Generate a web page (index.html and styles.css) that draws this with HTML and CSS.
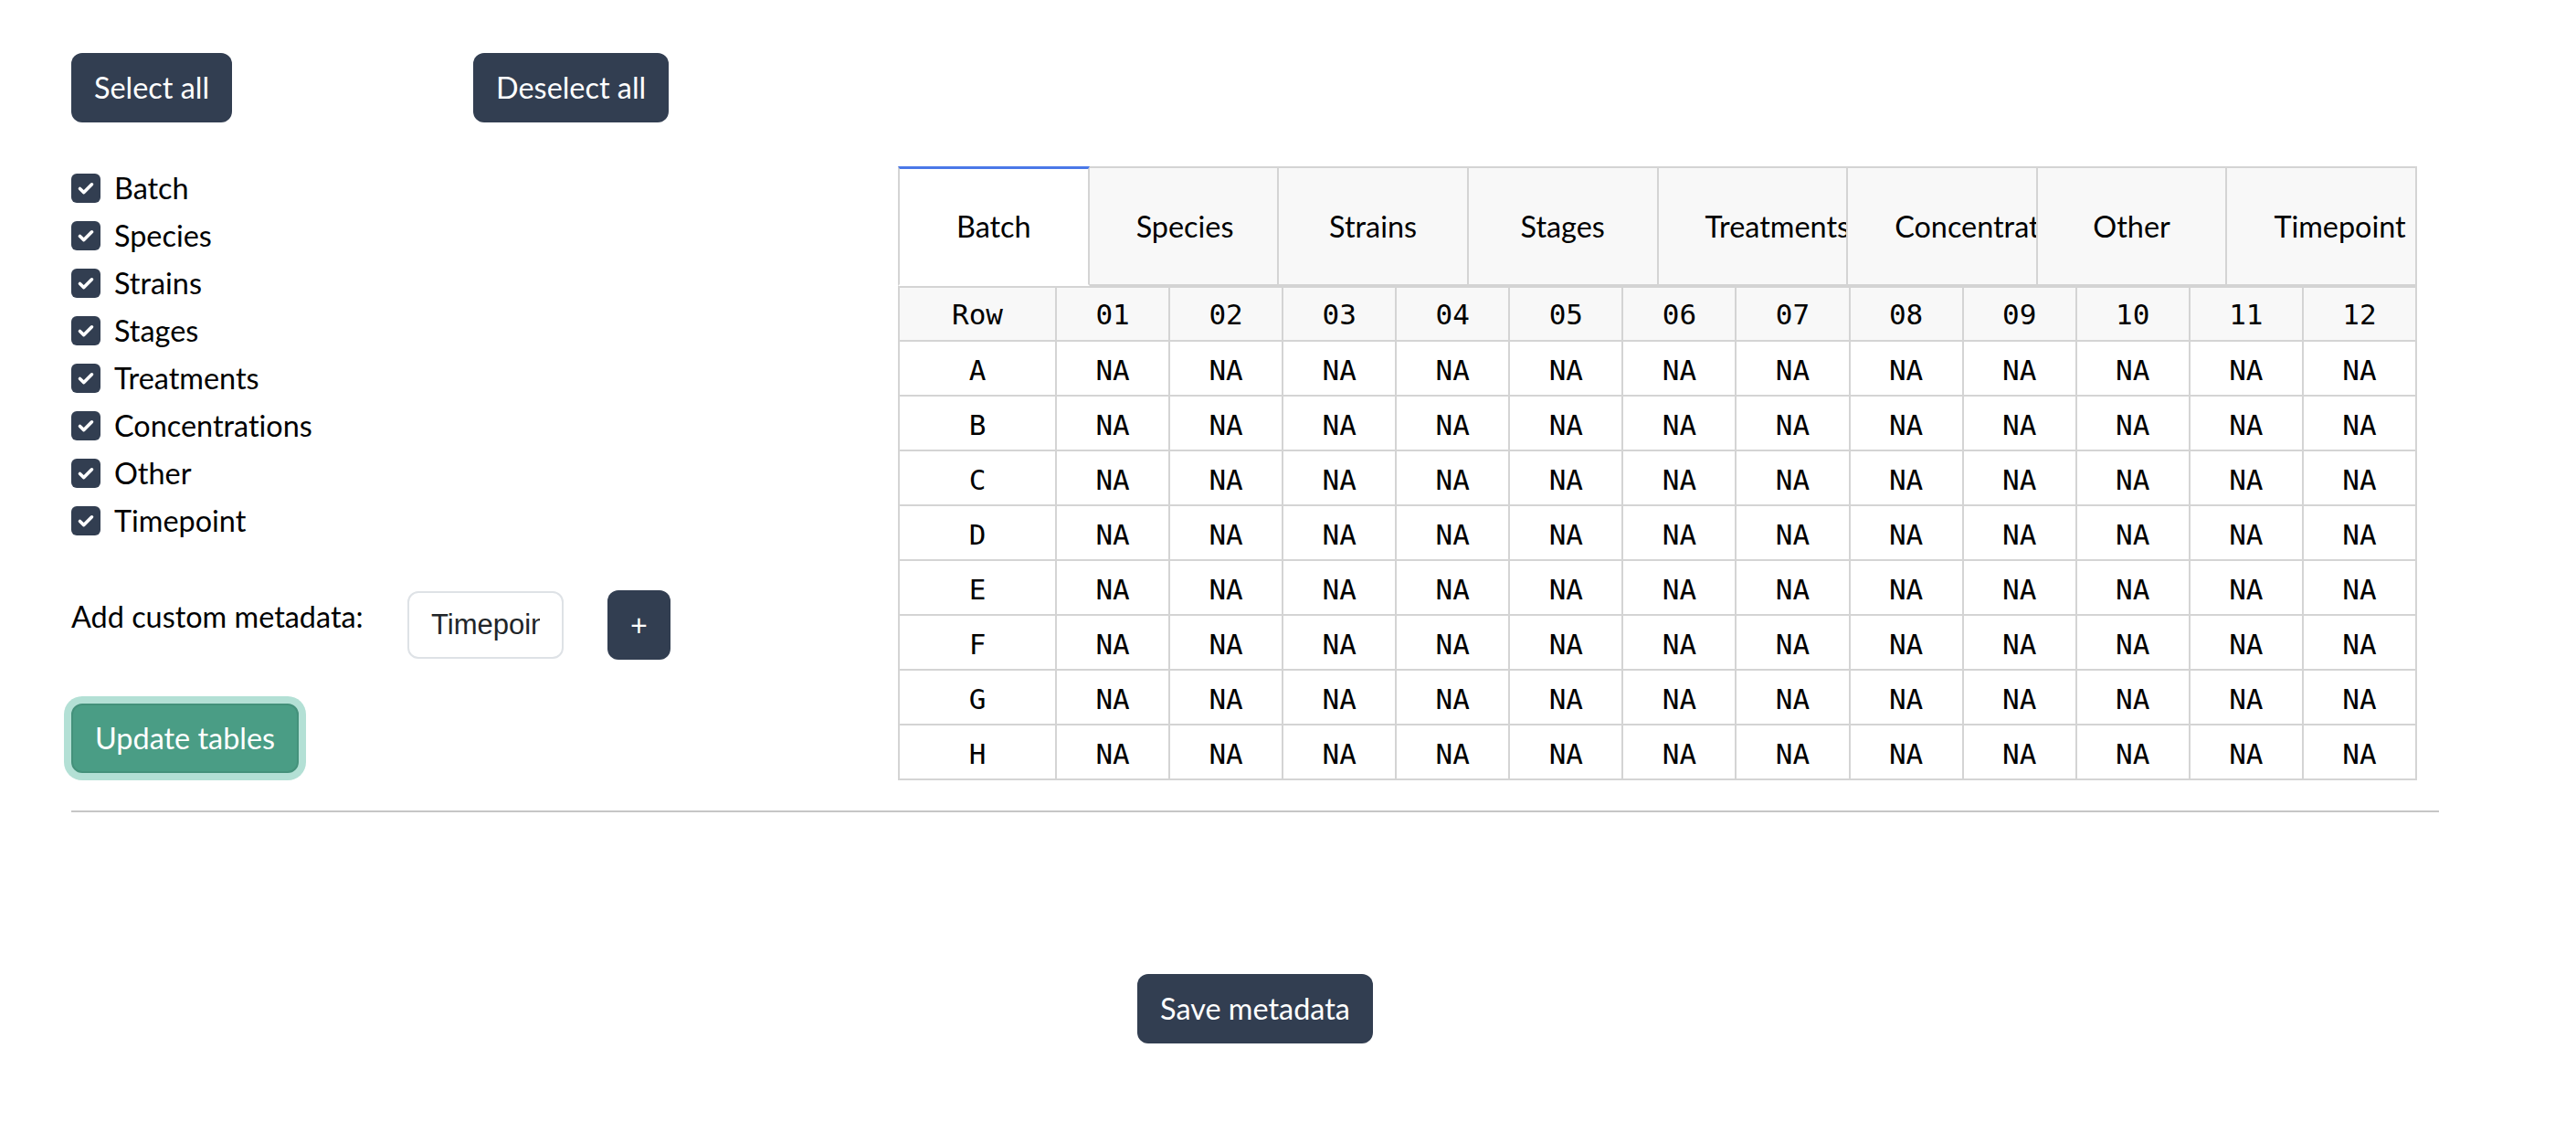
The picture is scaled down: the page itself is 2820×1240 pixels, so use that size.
FILE: index.html
```html
<!DOCTYPE html>
<html lang="en">
<head>
<meta charset="utf-8">
<title>Metadata</title>
<link rel="stylesheet" href="styles.css">
</head>
<body>
<div class="page">
  <div class="top-actions">
    <button class="btn">Select all</button>
    <button class="btn">Deselect all</button>
  </div>

  <div class="main">
    <div class="left">
      <div class="checks">
        <label class="check"><span class="box"><svg viewBox="0 0 32 32"><path d="M9.5 16.5 L13.8 20.6 L22.5 11.8"/></svg></span>Batch</label>
        <label class="check"><span class="box"><svg viewBox="0 0 32 32"><path d="M9.5 16.5 L13.8 20.6 L22.5 11.8"/></svg></span>Species</label>
        <label class="check"><span class="box"><svg viewBox="0 0 32 32"><path d="M9.5 16.5 L13.8 20.6 L22.5 11.8"/></svg></span>Strains</label>
        <label class="check"><span class="box"><svg viewBox="0 0 32 32"><path d="M9.5 16.5 L13.8 20.6 L22.5 11.8"/></svg></span>Stages</label>
        <label class="check"><span class="box"><svg viewBox="0 0 32 32"><path d="M9.5 16.5 L13.8 20.6 L22.5 11.8"/></svg></span>Treatments</label>
        <label class="check"><span class="box"><svg viewBox="0 0 32 32"><path d="M9.5 16.5 L13.8 20.6 L22.5 11.8"/></svg></span>Concentrations</label>
        <label class="check"><span class="box"><svg viewBox="0 0 32 32"><path d="M9.5 16.5 L13.8 20.6 L22.5 11.8"/></svg></span>Other</label>
        <label class="check"><span class="box"><svg viewBox="0 0 32 32"><path d="M9.5 16.5 L13.8 20.6 L22.5 11.8"/></svg></span>Timepoint</label>
      </div>

      <div class="custom-row">
        <span class="custom-label">Add custom metadata:</span>
        <input class="custom-input" type="text" value="Timepoint">
        <button class="btn btn-plus">+</button>
      </div>

      <button class="btn btn-update">Update tables</button>
    </div>

    <div class="right">
      <div class="tabs">
        <div class="tab active">Batch</div>
        <div class="tab">Species</div>
        <div class="tab">Strains</div>
        <div class="tab">Stages</div>
        <div class="tab">Treatments</div>
        <div class="tab">Concentrations</div>
        <div class="tab">Other</div>
        <div class="tab">Timepoint</div>
      </div>
      <table class="plate">
        <colgroup>
          <col class="col-row">
          <col><col><col><col><col><col><col><col><col><col><col><col>
        </colgroup>
        <thead>
          <tr><th>Row</th><th>01</th><th>02</th><th>03</th><th>04</th><th>05</th><th>06</th><th>07</th><th>08</th><th>09</th><th>10</th><th>11</th><th>12</th></tr>
        </thead>
        <tbody>
          <tr><td>A</td><td>NA</td><td>NA</td><td>NA</td><td>NA</td><td>NA</td><td>NA</td><td>NA</td><td>NA</td><td>NA</td><td>NA</td><td>NA</td><td>NA</td></tr>
          <tr><td>B</td><td>NA</td><td>NA</td><td>NA</td><td>NA</td><td>NA</td><td>NA</td><td>NA</td><td>NA</td><td>NA</td><td>NA</td><td>NA</td><td>NA</td></tr>
          <tr><td>C</td><td>NA</td><td>NA</td><td>NA</td><td>NA</td><td>NA</td><td>NA</td><td>NA</td><td>NA</td><td>NA</td><td>NA</td><td>NA</td><td>NA</td></tr>
          <tr><td>D</td><td>NA</td><td>NA</td><td>NA</td><td>NA</td><td>NA</td><td>NA</td><td>NA</td><td>NA</td><td>NA</td><td>NA</td><td>NA</td><td>NA</td></tr>
          <tr><td>E</td><td>NA</td><td>NA</td><td>NA</td><td>NA</td><td>NA</td><td>NA</td><td>NA</td><td>NA</td><td>NA</td><td>NA</td><td>NA</td><td>NA</td></tr>
          <tr><td>F</td><td>NA</td><td>NA</td><td>NA</td><td>NA</td><td>NA</td><td>NA</td><td>NA</td><td>NA</td><td>NA</td><td>NA</td><td>NA</td><td>NA</td></tr>
          <tr><td>G</td><td>NA</td><td>NA</td><td>NA</td><td>NA</td><td>NA</td><td>NA</td><td>NA</td><td>NA</td><td>NA</td><td>NA</td><td>NA</td><td>NA</td></tr>
          <tr><td>H</td><td>NA</td><td>NA</td><td>NA</td><td>NA</td><td>NA</td><td>NA</td><td>NA</td><td>NA</td><td>NA</td><td>NA</td><td>NA</td><td>NA</td></tr>
        </tbody>
      </table>
    </div>
  </div>

  <hr class="divider">

  <div class="save-row">
    <button class="btn">Save metadata</button>
  </div>
</div>
</body>
</html>
```

FILE: styles.css
```css
html, body {
  margin: 0;
  padding: 0;
  background: #ffffff;
}

body {
  font-family: Lato, "Noto Sans", sans-serif;
  font-size: 32.4px;
  color: #000000;
  font-variant-ligatures: none;
}

.page {
  width: 2592px;
  padding: 58px 0 0 78px;
}

.btn {
  font-family: Lato, "Noto Sans", sans-serif;
  font-size: 32.4px;
  font-variant-ligatures: none;
  line-height: 48px;
  padding: 14px 25px;
  border: 0;
  border-radius: 12px;
  background: #323e51;
  color: #ffffff;
  cursor: pointer;
  white-space: nowrap;
}

.top-actions {
  display: flex;
  gap: 264px;
}

.main {
  display: flex;
  margin-top: 46px;
}

.left {
  width: 905px;
  flex: none;
  display: flex;
  flex-direction: column;
  align-items: flex-start;
}

.checks {
  display: flex;
  flex-direction: column;
}

.check {
  display: flex;
  align-items: center;
  height: 52px;
  gap: 15px;
  line-height: 52px;
}

.box {
  width: 32px;
  height: 32px;
  border-radius: 6px;
  background: #323e51;
  display: block;
  flex: none;
}

.box svg {
  display: block;
  width: 32px;
  height: 32px;
}

.box path {
  fill: none;
  stroke: #ffffff;
  stroke-width: 3.6;
  stroke-linecap: round;
  stroke-linejoin: round;
}

.custom-row {
  display: flex;
  align-items: flex-start;
  margin-top: 50px;
}

.custom-label {
  width: 368px;
  line-height: 48px;
  margin-top: 5px;
  flex: none;
}

.custom-input {
  box-sizing: border-box;
  width: 171px;
  height: 74px;
  margin-top: 1px;
  padding: 0 24px;
  border: 2px solid #dee2e6;
  border-radius: 12px;
  font-family: "Liberation Sans", Arial, sans-serif;
  font-size: 31px;
  color: #212529;
  background: #ffffff;
  outline: none;
}

.btn-plus {
  margin-left: 48px;
  width: 69px;
  padding: 14px 0;
  text-align: center;
}

.btn-update {
  margin-top: 48px;
  background: #4a9d85;
  border: 2px solid #44917b;
  padding: 12px 24px;
  box-shadow: 0 0 0 8px #b3e0d5;
}

.right {
  margin-top: 2px;
}

.tabs {
  display: flex;
  width: 1663px;
}

.tab {
  box-sizing: border-box;
  flex: 1 1 0;
  min-width: 0;
  height: 131px;
  padding: 0 51px;
  line-height: 127px;
  text-align: center;
  white-space: nowrap;
  overflow: hidden;
  background: #f8f8f8;
  border-top: 2px solid #d4d4d4;
  border-right: 2px solid #d4d4d4;
  border-bottom: 2px solid #d4d4d4;
}

.tab.active {
  background: #ffffff;
  border-top: 3px solid #4a78e8;
  border-left: 2px solid #d4d4d4;
  border-bottom-color: #ffffff;
  line-height: 126px;
}

.plate {
  width: 1663px;
  table-layout: fixed;
  border-collapse: collapse;
  font-family: "DejaVu Sans Mono", "Liberation Mono", monospace;
  font-size: 31px;
  color: #000000;
}

.col-row {
  width: 172px;
}

.plate th,
.plate td {
  border: 2px solid #d4d4d4;
  text-align: center;
  font-weight: normal;
  padding: 0;
}

.plate tbody td {
  padding-top: 3px;
}

.plate thead tr {
  height: 59px;
  background: #f8f8f8;
}

.plate tbody tr {
  height: 60px;
}

.divider {
  margin: 33px 0 0 0;
  border: 0;
  height: 2px;
  background: #c6c6c6;
  width: 2592px;
}

.save-row {
  margin-top: 177px;
  text-align: center;
}
```
